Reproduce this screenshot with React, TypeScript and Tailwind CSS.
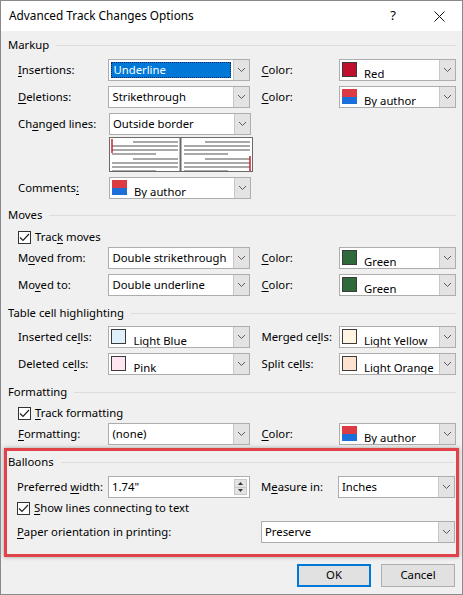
import type { ReactNode } from "react";

const font = { fontFamily: '"Noto Sans", sans-serif' };

function Acc({ pre = "", k, post = "" }: { pre?: string; k: string; post?: string }) {
	return (
		<span>
			{pre}
			<span className="underline underline-offset-2">{k}</span>
			{post}
		</span>
	);
}

function Chevron() {
	return (
		<svg width="9" height="6" viewBox="0 0 9 6" className="block">
			<path d="M1 1 L4.5 4.5 L8 1" fill="none" stroke="#5a5a5a" strokeWidth="1" />
		</svg>
	);
}

function ArrowBtn() {
	return (
		<div className="flex w-[16px] items-center justify-center border-l border-[#c8c8c8] bg-[#e3e3e3]">
			<Chevron />
		</div>
	);
}

function Swatch({ kind }: { kind: string }) {
	if (kind === "author") {
		return (
			<div className="flex h-[15px] w-[15px] shrink-0 flex-col">
				<div className="h-1/2 bg-[#dc3b43]" />
				<div className="h-1/2 bg-[#1c6fd8]" />
			</div>
		);
	}
	const fill: Record<string, string> = {
		red: "bg-[#c0102e]",
		green: "bg-[#2f6a3a]",
		blue: "bg-[#dff0fa]",
		pink: "bg-[#fde5f1]",
		yellow: "bg-[#fff4e1]",
		orange: "bg-[#fde2cf]",
	};
	return <div className={`h-[15px] w-[15px] shrink-0 border border-[#3a3a3a] ${fill[kind]}`} />;
}

function Select({
	w,
	value,
	swatch,
	selected,
}: {
	w: string;
	value: string;
	swatch?: string;
	selected?: boolean;
}) {
	return (
		<div className={`flex h-[22px] shrink-0 border border-[#adadad] bg-white ${w}`}>
			{swatch ? (
				<div className="flex min-w-0 flex-1 items-start gap-[7px] overflow-hidden pl-[2px] pt-[2px]">
					<Swatch kind={swatch} />
					<span className="pt-[3px] leading-[17px]">{value}</span>
				</div>
			) : selected ? (
				<div className="flex flex-1 p-[2px]">
					<div className="flex flex-1 items-center border border-dotted border-[#0a2a55] bg-[#0078d7] pl-[1px] text-white">
						{value}
					</div>
				</div>
			) : (
				<div className="flex min-w-0 flex-1 items-center overflow-hidden pl-[3px]">{value}</div>
			)}
			<ArrowBtn />
		</div>
	);
}

function Header({ children, className = "" }: { children: ReactNode; className?: string }) {
	return (
		<div className={`flex h-[16px] items-center gap-[7px] ${className}`}>
			<span>{children}</span>
			<div className="h-px flex-1 bg-[#dcdcdc]" />
		</div>
	);
}

function Check({ children }: { children: ReactNode }) {
	return (
		<div className="flex h-[16px] items-center gap-[4px] pl-[17px]">
			<div className="flex h-[13px] w-[13px] items-center justify-center border border-[#333] bg-white">
				<svg width="11" height="9" viewBox="0 0 11 9">
					<path d="M1 4.5 L4 7.5 L10 1" fill="none" stroke="#222" strokeWidth="1.2" />
				</svg>
			</div>
			<span>{children}</span>
		</div>
	);
}

function Row({ children, className = "" }: { children: ReactNode; className?: string }) {
	return <div className={`flex h-[22px] items-center pl-[17px] ${className}`}>{children}</div>;
}

function Preview() {
	const L = (x1: number, x2: number, y: number) => (
		<line key={`${x1}-${y}`} x1={x1} x2={x2} y1={y} y2={y} stroke="#a8a8a8" strokeWidth="2" />
	);
	const half = (ox: number) => [
		L(ox + 23, ox + 68, 4),
		L(ox + 2, ox + 68, 8),
		L(ox + 2, ox + 68, 12),
		L(ox + 2, ox + 46, 16),
		L(ox + 23, ox + 68, 21),
		L(ox + 2, ox + 68, 25),
		L(ox + 2, ox + 68, 29),
		L(ox + 2, ox + 46, 33),
	];
	return (
		<div className="ml-[108px] h-[35px] w-[144px] border border-[#6a6a6a] bg-white">
			<svg width="142" height="33" viewBox="0 0 142 33" className="block">
				{half(0)}
				{half(72)}
				<line x1="70.5" x2="70.5" y1="0" y2="33" stroke="#6a6a6a" strokeWidth="2" />
				<line x1="2" x2="2" y1="1" y2="15" stroke="#c8202e" strokeWidth="1.5" />
				<line x1="140" x2="140" y1="18" y2="33" stroke="#c8202e" strokeWidth="1.5" />
			</svg>
		</div>
	);
}

function Button({ children, primary }: { children: ReactNode; primary?: boolean }) {
	return (
		<div
			className={`flex h-[23px] w-[74px] items-center justify-center bg-[#e1e1e1] ${
				primary ? "border-2 border-[#0078d7]" : "border border-[#adadad]"
			}`}
		>
			{children}
		</div>
	);
}

export default function App() {
	return (
		<div
			className="box-border flex h-[595px] w-[463px] flex-col overflow-hidden whitespace-nowrap border border-[#8a8a8a] bg-[#f0f0f0] text-[11.3px] text-black"
			style={font}
		>
			<div className="flex h-[30px] shrink-0 items-center bg-white pl-[8px] text-[11.8px]">
				<span className="flex-1">Advanced Track Changes Options</span>
				<span className="mr-[38px] text-[13px]">?</span>
				<svg width="11" height="11" viewBox="0 0 11 11" className="mr-[17px]">
					<path d="M0.5 0.5 L10.5 10.5 M10.5 0.5 L0.5 10.5" stroke="#111" strokeWidth="1" />
				</svg>
			</div>

			<div className="flex flex-col pr-[6px]">
				<Header className="mt-[6px] pl-[7px]">Markup</Header>
				<Row className="mt-[6px]">
					<span className="w-[91px]">
						<Acc k="I" post="nsertions:" />
					</span>
					<Select w="w-[142px]" value="Underline" selected />
					<span className="ml-[11px] w-[78px]">
						<Acc k="C" post="olor:" />
					</span>
					<Select w="w-[117px]" value="Red" swatch="red" />
				</Row>
				<Row className="mt-[5px]">
					<span className="w-[91px]">
						<Acc k="D" post="eletions:" />
					</span>
					<Select w="w-[142px]" value="Strikethrough" />
					<span className="ml-[11px] w-[78px]">
						<Acc k="C" post="olor:" />
					</span>
					<Select w="w-[117px]" value="By author" swatch="author" />
				</Row>
				<Row className="mt-[5px]">
					<span className="w-[91px]">
						<Acc pre="Ch" k="a" post="nged lines:" />
					</span>
					<Select w="w-[142px]" value="Outside border" />
				</Row>
				<div className="mt-[2px]">
					<Preview />
				</div>
				<Row className="mt-[5px]">
					<span className="w-[91px]">
						<Acc pre="Comments" k=":" />
					</span>
					<Select w="w-[142px]" value="By author" swatch="author" />
				</Row>

				<Header className="mt-[8px] pl-[7px]">Moves</Header>
				<div className="mt-[6px]">
					<Check>
						<Acc pre="Trac" k="k" post=" moves" />
					</Check>
				</div>
				<Row className="mt-[2px]">
					<span className="w-[91px]">
						<Acc pre="M" k="o" post="ved from:" />
					</span>
					<Select w="w-[142px]" value="Double strikethrough" />
					<span className="ml-[11px] w-[78px]">
						<Acc k="C" post="olor:" />
					</span>
					<Select w="w-[117px]" value="Green" swatch="green" />
				</Row>
				<Row className="mt-[5px]">
					<span className="w-[91px]">
						<Acc pre="Mo" k="v" post="ed to:" />
					</span>
					<Select w="w-[142px]" value="Double underline" />
					<span className="ml-[11px] w-[78px]">
						<Acc k="C" post="olor:" />
					</span>
					<Select w="w-[117px]" value="Green" swatch="green" />
				</Row>

				<Header className="mt-[9px] pl-[7px]">Table cell highlighting</Header>
				<Row className="mt-[5px]">
					<span className="w-[91px]">
						<Acc pre="Inserted ce" k="l" post="ls:" />
					</span>
					<Select w="w-[142px]" value="Light Blue" swatch="blue" />
					<span className="ml-[11px] w-[78px]">
						<Acc pre="Merged ce" k="l" post="ls:" />
					</span>
					<Select w="w-[117px]" value="Light Yellow" swatch="yellow" />
				</Row>
				<Row className="mt-[5px]">
					<span className="w-[91px]">
						<Acc pre="Deleted ce" k="l" post="ls:" />
					</span>
					<Select w="w-[142px]" value="Pink" swatch="pink" />
					<span className="ml-[11px] w-[78px]">
						<Acc pre="Split ce" k="l" post="ls:" />
					</span>
					<Select w="w-[117px]" value="Light Orange" swatch="orange" />
				</Row>

				<Header className="mt-[9px] pl-[7px]">Formatting</Header>
				<div className="mt-[5px]">
					<Check>
						<Acc k="T" post="rack formatting" />
					</Check>
				</div>
				<Row className="mt-[2px]">
					<span className="w-[91px]">
						<Acc k="F" post="ormatting:" />
					</span>
					<Select w="w-[142px]" value="(none)" />
					<span className="ml-[11px] w-[78px]">
						<Acc k="C" post="olor:" />
					</span>
					<Select w="w-[117px]" value="By author" swatch="author" />
				</Row>
			</div>

			<div className="mx-[3px] mt-[3px] flex flex-col border-[3px] border-[#e0424a] pb-[11px] pr-[1px] shadow-[0_0_4px_rgba(0,0,0,0.35)]">
				<Header className="mt-[3px] pl-[1px]">Balloons</Header>
				<div className="mt-[6px] flex h-[22px] items-center pl-[10px]">
					<span className="w-[91px]">
						<Acc pre="Preferred " k="w" post="idth:" />
					</span>
					<div className="flex h-[22px] w-[142px] items-center border border-[#adadad] bg-white">
						<span className="flex-1 pl-[3px]">1.74"</span>
						<div className="mr-[2px] flex h-[16px] w-[13px] flex-col border border-[#c8c8c8] bg-[#e3e3e3]">
							<div className="flex flex-1 items-center justify-center border-b border-[#c8c8c8]">
								<svg width="5" height="3" viewBox="0 0 5 3">
									<path d="M0 3 L2.5 0 L5 3 Z" fill="#333" />
								</svg>
							</div>
							<div className="flex flex-1 items-center justify-center">
								<svg width="5" height="3" viewBox="0 0 5 3">
									<path d="M0 0 L2.5 3 L5 0 Z" fill="#333" />
								</svg>
							</div>
						</div>
					</div>
					<span className="ml-[11px] w-[77px]">
						<Acc pre="M" k="e" post="asure in:" />
					</span>
					<Select w="w-[117px]" value="Inches" />
				</div>
				<div className="-ml-[7px] mt-[2px]">
					<Check>
						<Acc k="S" post="how lines connecting to text" />
					</Check>
				</div>
				<div className="mt-[5px] flex h-[22px] items-center pl-[10px]">
					<span className="w-[244px]">
						<Acc k="P" post="aper orientation in printing:" />
					</span>
					<Select w="w-[194px]" value="Preserve" />
				</div>
			</div>

			<div className="mt-[7px] flex justify-end gap-[10px] pr-[7px]">
				<Button primary>OK</Button>
				<Button>Cancel</Button>
			</div>
		</div>
	);
}
